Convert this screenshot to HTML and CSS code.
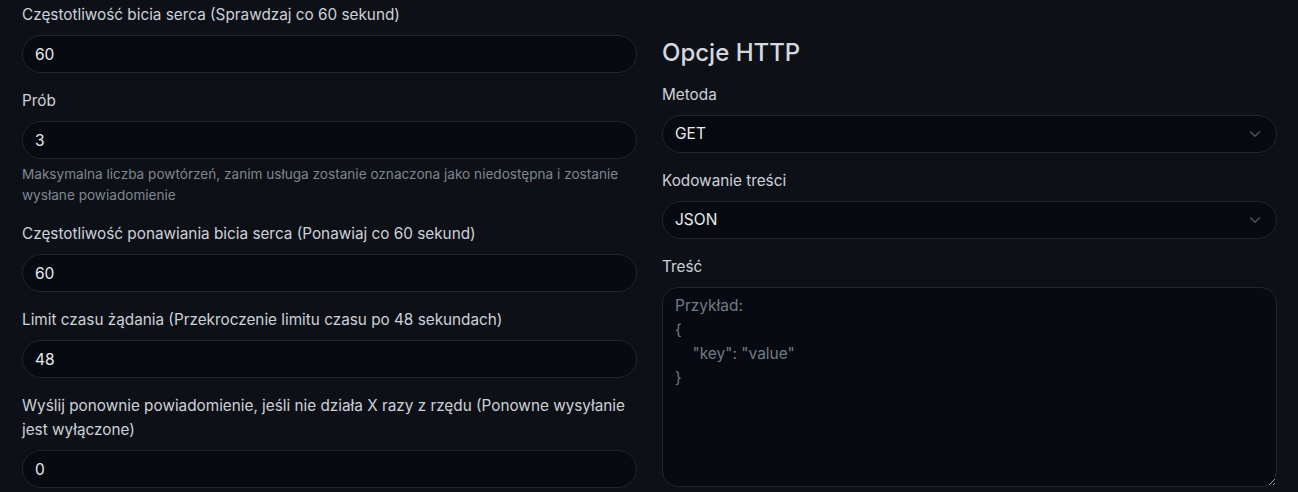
FILE: index.html
```html
<!DOCTYPE html>
<html>
<head>
  <title>Edytuj monitor</title>
  <link rel="stylesheet" href="styles.css">
</head>
<body>

<div class="page">
  <div class="col">
    <div class="field">
      <label class="form-label" for="interval">Częstotliwość bicia serca (Sprawdzaj co 60 sekund)</label>
      <input type="text" class="form-control" id="interval" value="60">
    </div>

    <div class="field">
      <label class="form-label" for="retries">Prób</label>
      <input type="text" class="form-control" id="retries" value="3">
      <div class="form-text">Maksymalna liczba powtórzeń, zanim usługa zostanie oznaczona jako niedostępna i zostanie wysłane powiadomienie</div>
    </div>

    <div class="field">
      <label class="form-label" for="retry-interval">Częstotliwość ponawiania bicia serca (Ponawiaj co 60 sekund)</label>
      <input type="text" class="form-control" id="retry-interval" value="60">
    </div>

    <div class="field">
      <label class="form-label" for="timeout">Limit czasu żądania (Przekroczenie limitu czasu po 48 sekundach)</label>
      <input type="text" class="form-control" id="timeout" value="48">
    </div>

    <div class="field">
      <label class="form-label" for="resend">Wyślij ponownie powiadomienie, jeśli nie działa X razy z rzędu (Ponowne wysyłanie jest wyłączone)</label>
      <input type="text" class="form-control" id="resend" value="0">
    </div>
  </div>

  <div class="col">
    <h4 class="section-title">Opcje HTTP</h4>

    <div class="field">
      <label class="form-label" for="method">Metoda</label>
      <div class="select-wrap">
        <select class="form-select" id="method">
          <option>GET</option>
          <option>POST</option>
        </select>
        <svg class="chevron" width="12" height="12" viewBox="0 0 16 16"><path d="M2 5l6 6 6-6" fill="none" stroke="#4a525e" stroke-width="2" stroke-linecap="round" stroke-linejoin="round"/></svg>
      </div>
    </div>

    <div class="field">
      <label class="form-label" for="encoding">Kodowanie treści</label>
      <div class="select-wrap">
        <select class="form-select" id="encoding">
          <option>JSON</option>
          <option>XML</option>
        </select>
        <svg class="chevron" width="12" height="12" viewBox="0 0 16 16"><path d="M2 5l6 6 6-6" fill="none" stroke="#4a525e" stroke-width="2" stroke-linecap="round" stroke-linejoin="round"/></svg>
      </div>
    </div>

    <div class="field">
      <label class="form-label" for="body">Treść</label>
      <textarea class="form-control body-area" id="body" placeholder="Przykład:
{
    &quot;key&quot;: &quot;value&quot;
}"></textarea>
    </div>
  </div>
</div>

</body>
</html>
```

FILE: styles.css
```css
body {
  margin: 0;
  background-color: #0d1117;
  color: #c9ced6;
  font-family: Inter, "Noto Sans", sans-serif;
  font-size: 16px;
  line-height: 1.5;
}
.page {
  display: grid;
  grid-template-columns: 615px 615px;
  column-gap: 25px;
  padding: 3px 0 0 22px;
}
.field { margin-bottom: 16px; }
.form-label {
  display: block;
  margin-bottom: 8px;
  font-size: 15.3px;
  line-height: 24px;
  color: #cdd1d7;
}
.form-control, .form-select {
  display: block;
  box-sizing: border-box;
  width: 100%;
  height: 38px;
  padding: 6px 12px;
  font-family: inherit;
  font-size: 15.5px;
  line-height: 24px;
  color: #e9ecef;
  background-color: #070a10;
  border: 1px solid #1d2634;
  border-radius: 19px;
  outline: none;
}
.form-text {
  margin-top: 5px;
  font-size: 13.6px;
  line-height: 21px;
  color: #80868f;
}
.section-title {
  margin: 35px 0 16px 0;
  font-size: 24px;
  font-weight: 500;
  line-height: 29px;
  color: #d4d8de;
}
.select-wrap { position: relative; }
.form-select {
  appearance: none;
  -webkit-appearance: none;
  padding-right: 36px;
}
.chevron {
  position: absolute;
  right: 16px;
  top: 13px;
}
.body-area {
  height: 200px;
  resize: vertical;
  border-radius: 16px;
}
.body-area::placeholder { color: #737a84; }
```
